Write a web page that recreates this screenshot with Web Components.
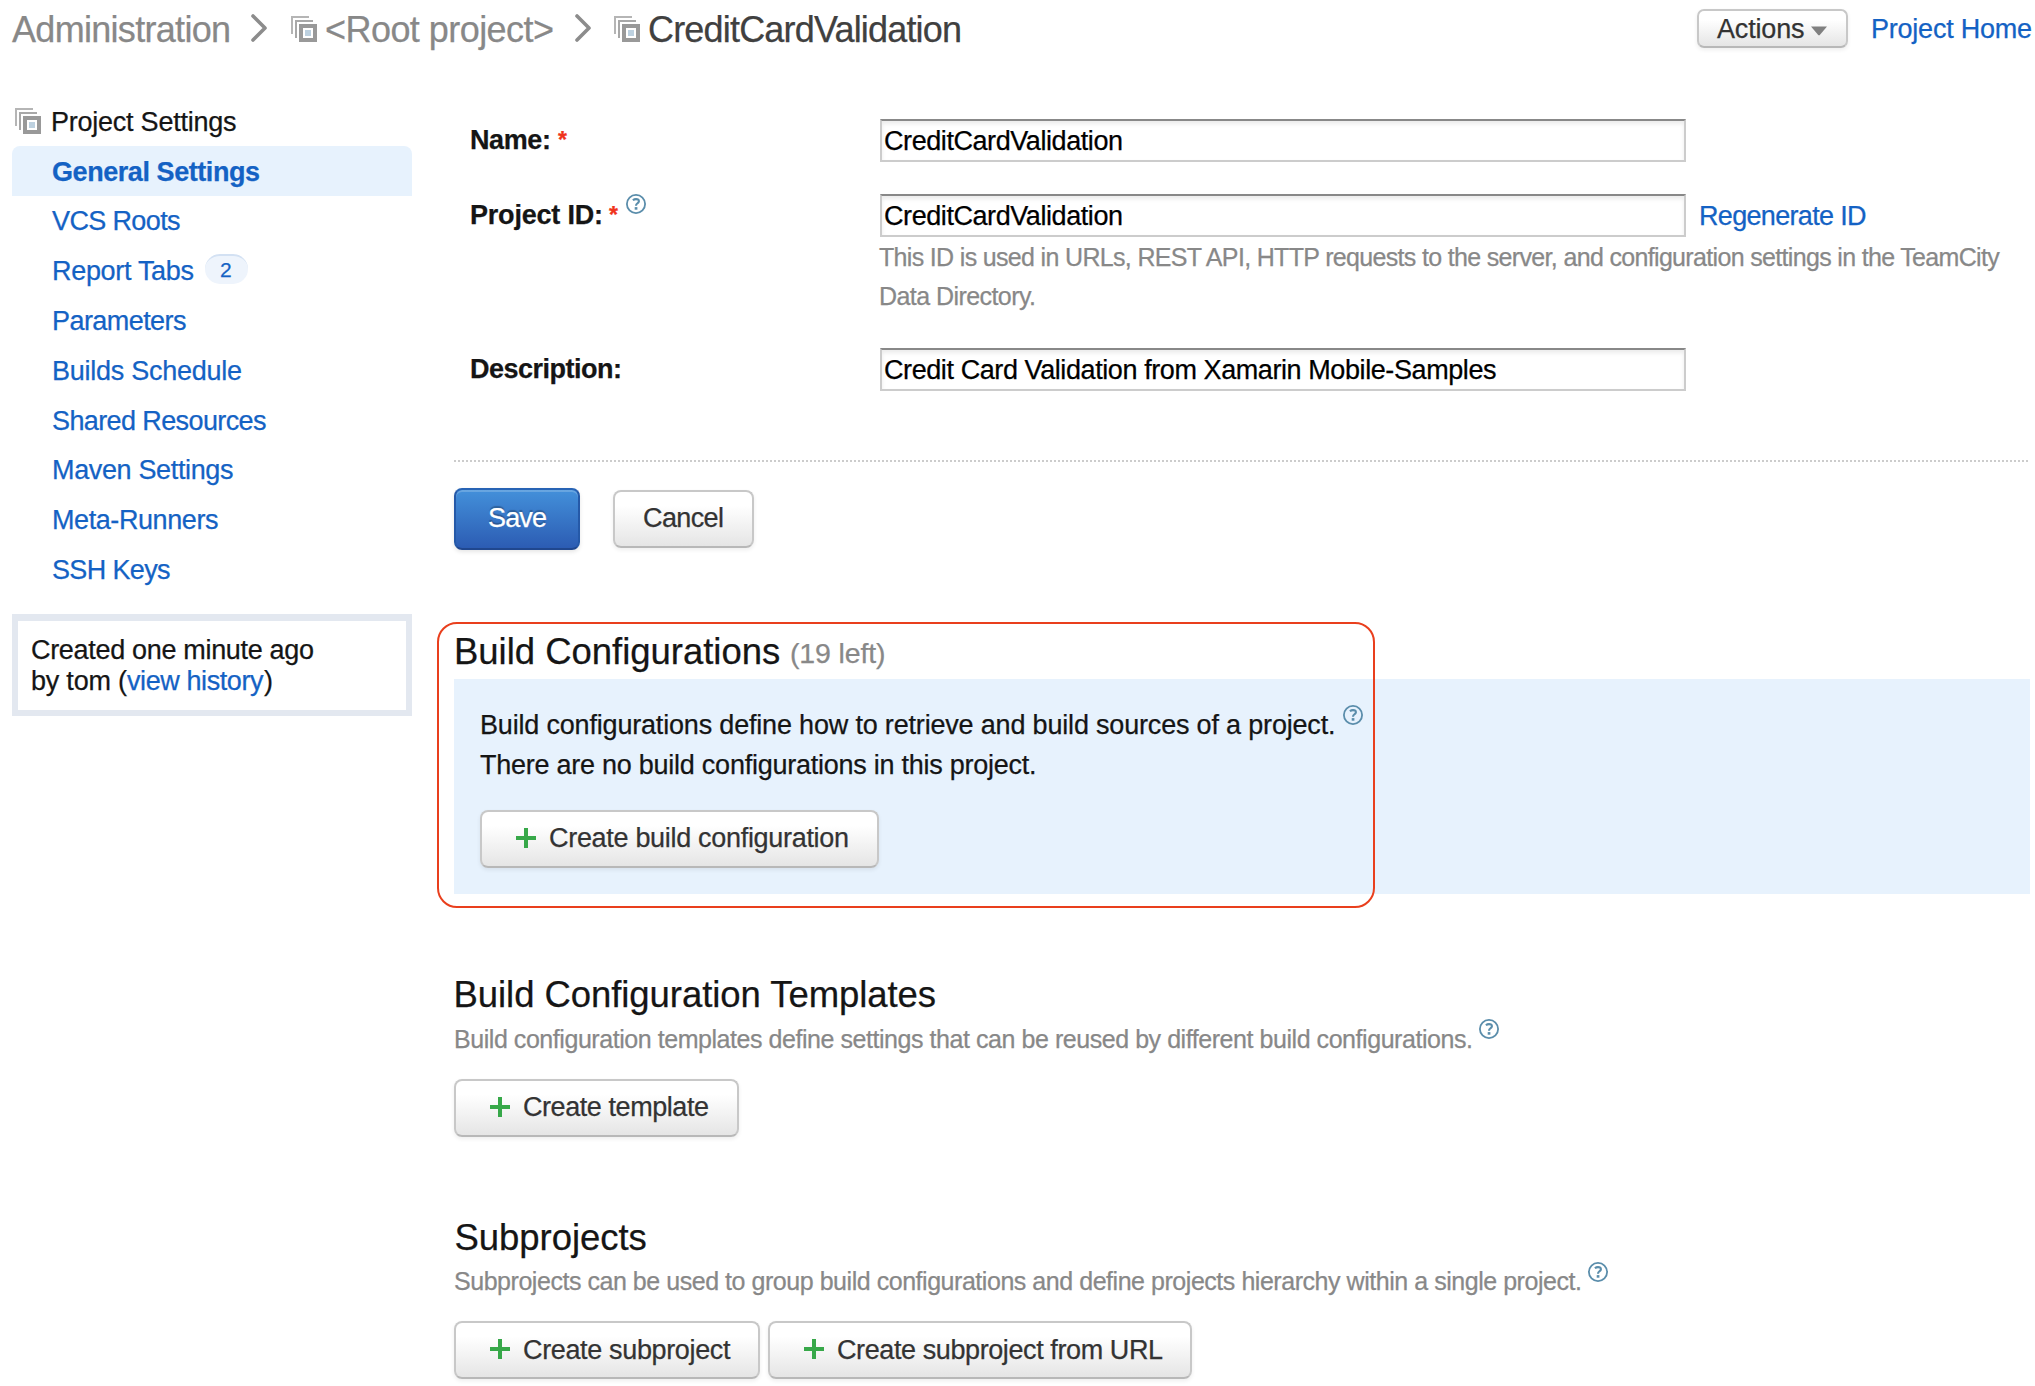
<!DOCTYPE html>
<html lang="en">
<head>
<meta charset="utf-8">
<title>CreditCardValidation - Project Settings</title>
<style>
html,body{margin:0;background:#fff}
body{width:2035px;height:1386px;overflow:hidden;font-family:"Liberation Sans",Arial,sans-serif;font-size:27px;color:#151515}
</style>
</head>
<body>
<admin-page></admin-page>
<script>
const define = (name, html, setup) => {
  const tpl = document.createElement('template');
  tpl.innerHTML = html;
  customElements.define(name, class extends HTMLElement {
    connectedCallback() {
      if (this.shadowRoot) return;
      this.attachShadow({ mode: 'open' }).appendChild(tpl.content.cloneNode(true));
      if (setup) setup(this, this.shadowRoot);
    }
  });
};

/* One line of text whose visible ink spans exactly `w` pixels. */
const ctx = document.createElement('canvas').getContext('2d');
define('fit-text', `<style>
:host{display:block;flex:none;white-space:nowrap;line-height:40px;font-size:27px;font-variant-ligatures:none;-webkit-text-stroke:.25px currentColor}
:host([kind=title]){font-size:36px;line-height:41px}
:host([kind=head]){font-size:36.5px;line-height:41px}
:host([kind=note]){font-size:25px;line-height:39px;color:#888}
:host([kind=count]){font-size:28.5px;color:#888}
:host([kind=mini]){font-size:21px;line-height:30px}
:host([kind=star]){font-size:23px;line-height:40px;color:#f0341c}
:host([link]){color:#1462c4;cursor:pointer}
:host([bold]){font-weight:bold}
span{display:block}
</style><span><slot></slot></span>`, (el, root) => {
  const cs = getComputedStyle(el), text = el.textContent, w = +el.getAttribute('w');
  ctx.font = `${cs.fontWeight} ${cs.fontSize} "Liberation Sans"`;
  const m = ctx.measureText(text);
  const ink = m.actualBoundingBoxLeft + m.actualBoundingBoxRight;
  const span = root.querySelector('span');
  el.style.width = w + 'px';
  span.style.marginLeft = m.actualBoundingBoxLeft + 'px';
  if (text.length > 1) span.style.letterSpacing = (w - ink) / (text.length - 1) + 'px';
});

define('project-icon', `<style>:host{display:block;flex:none;width:26px;height:26px}svg{display:block}</style>
<svg width="26" height="26" shape-rendering="crispEdges"><path d="M0 0H18V2H2V18H0Z" fill="#b5b5b5"/><path d="M4 4H22V6H6V22H4Z" fill="#a8a8a8"/><path fill-rule="evenodd" d="M8 8H26V26H8ZM12 12V22H22V12Z" fill="#999"/><path d="M14 14H20V20H14Z" fill="#bdd1e0"/></svg>`);

define('help-icon', `<style>:host{display:block;flex:none;width:20px;height:20px}svg{display:block}</style>
<svg width="20" height="20" fill="none" stroke="#5a8dab"><circle cx="10" cy="10" r="9.1" stroke-width="1.8"/><path d="M6.9 6.3Q8.3 5.1 10 5.1Q13 5.1 12.9 7.3Q12.8 8.5 11.4 9.3Q10 10.1 10 11.7" stroke-width="2.1"/><path d="M8.7 14.4H11.4" stroke-width="2.6"/></svg>`);

define('crumb-arrow', `<style>:host{display:block;flex:none;width:17px;height:28px}svg{display:block}</style>
<svg width="17" height="28" fill="none" stroke="#8c8c8c" stroke-width="3.6" stroke-linecap="round" stroke-linejoin="round"><path d="M2 2L14 14L2 26"/></svg>`);

define('plus-icon', `<style>:host{display:block;flex:none;width:20px;height:20px}svg{display:block}</style>
<svg width="20" height="20" shape-rendering="crispEdges"><path d="M8 0H12V8H20V12H12V20H8V12H0V8H8Z" fill="#37a849"/></svg>`);

define('tc-button', `<style>
:host{display:flex;flex:none;align-items:flex-start;box-sizing:border-box;height:58px;padding:6px 0 0 29px;border:2px solid #c8c8c8;border-bottom-color:#b8b8b8;border-radius:8px;background:linear-gradient(#fff 25%,#e5e5e5);box-shadow:0 2px 4px rgba(0,0,0,.07);color:#333;cursor:pointer}
:host([primary]){height:62px;padding:8px 0 0 33px;border-color:#2763b5 #2559a8 #20478e;background:linear-gradient(#4390da,#2c5cb3);box-shadow:inset 0 2px 0 rgba(255,255,255,.2),0 2px 4px rgba(0,0,0,.1);color:#fff;text-shadow:0 -2px 1px rgba(0,0,0,.25)}
:host([add]){padding:6px 0 0 34px}
plus-icon{display:none;margin:10px 14px 0 0}
:host([add]) plus-icon{display:block}
:host([small]){height:39px;padding:0 0 0 18px;border-radius:7px}
</style><plus-icon></plus-icon><slot></slot>`);

define('text-field', `<style>
:host{display:block;flex:none;box-sizing:border-box;width:806px;height:43px;padding-left:3px;border:2px solid #ccc;border-top-color:#888;box-shadow:inset 0 3px 4px rgba(0,0,0,.08);background:#fff;color:#000}
</style><slot></slot>`);

define('form-row', `<style>
:host{display:flex;align-items:flex-start;padding-left:17px}
.label{display:flex;width:409px;flex:none;padding-top:1px}
.side{display:flex}
</style><div class="label"><slot name="label"></slot></div><div><div class="side"><slot></slot></div><slot name="hint"></slot></div>`);

define('nav-item', `<style>
:host{display:flex;box-sizing:border-box;height:49.8px;padding:5.6px 0 0 41px}
:host([active]){background:#e7f2fd;border-radius:8px 8px 0 0}
</style><slot></slot>`);

define('count-badge', `<style>
:host{display:block;box-sizing:border-box;width:43px;height:30px;margin:3px 0 0 11px;padding-left:15px;border-top:2px solid #d3e1f3;border-radius:15px;background:#eef4fc}
</style><slot></slot>`);

define('page-header', `<style>
:host{display:flex;align-items:flex-start;height:50px;padding-left:12px;color:#888}
fit-text[kind=title]{margin-top:9px}
project-icon{margin-top:16px}crumb-arrow{margin-top:14px}
.now{color:#404040}
tc-button{width:151px;box-sizing:border-box;margin:9px 25px 0 0}
tc-button fit-text{margin-top:-2px}
.right{display:flex;margin-left:auto;padding-right:4px}
.caret{margin:15px 0 0 7px;display:block}
</style>
<fit-text kind="title" w="217">Administration</fit-text>
<crumb-arrow style="margin-left:22px"></crumb-arrow>
<project-icon style="margin-left:23px"></project-icon>
<fit-text kind="title" w="227" style="margin-left:9px">&lt;Root project&gt;</fit-text>
<crumb-arrow style="margin-left:22px"></crumb-arrow>
<project-icon style="margin-left:22px"></project-icon>
<fit-text kind="title" w="311" class="now" style="margin-left:9px">CreditCardValidation</fit-text>
<div class="right"><tc-button small><fit-text w="87">Actions</fit-text><svg class="caret" width="16" height="10"><path d="M0 0.5H16L8.6 9.3H7.4Z" fill="#808080"/></svg></tc-button>
<fit-text link w="158" style="margin-top:9px">Project Home</fit-text></div>`);

define('side-bar', `<style>
:host{display:block;flex:none;width:400px;padding-top:52px}
.head{display:flex;height:44px;padding-left:3px}
.head project-icon{margin:6px 12px 0 0}
.stem{margin-left:1px}
.slant{margin-left:-1px}
.info{box-sizing:border-box;height:102px;margin-top:19.8px;border:6px solid #e3e8f0;border-top-width:7px;padding:14px 0 0 14px}
.info fit-text{line-height:31px}
.line{display:flex}
</style>
<div class="head"><project-icon></project-icon><fit-text w="183">Project Settings</fit-text></div>
<nav>
<nav-item active><fit-text link bold w="206">General Settings</fit-text></nav-item>
<nav-item><fit-text link class="slant" w="128">VCS Roots</fit-text></nav-item>
<nav-item><fit-text link class="stem" w="140">Report Tabs</fit-text><count-badge><fit-text link kind="mini" style="margin:-1px 0 0 1px" w="11">2</fit-text></count-badge></nav-item>
<nav-item><fit-text link class="stem" w="132">Parameters</fit-text></nav-item>
<nav-item><fit-text link class="stem" w="187">Builds Schedule</fit-text></nav-item>
<nav-item><fit-text link w="213">Shared Resources</fit-text></nav-item>
<nav-item><fit-text link class="stem" w="179">Maven Settings</fit-text></nav-item>
<nav-item><fit-text link class="stem" w="164">Meta-Runners</fit-text></nav-item>
<nav-item><fit-text link w="117">SSH Keys</fit-text></nav-item>
</nav>
<div class="info"><fit-text w="281">Created one minute ago</fit-text>
<div class="line"><fit-text w="95">by tom (</fit-text><fit-text link w="137">view history</fit-text><fit-text w="6">)</fit-text></div></div>`);

define('settings-form', `<style>
:host{display:block;padding-top:69px}
.rule{width:1574px;height:2px;background:repeating-linear-gradient(90deg,#ccc 0 2px,#fff 2px 4px)}
.actions{display:flex;align-items:flex-start;padding-top:26px}
</style>
<form-row style="height:75px"><fit-text slot="label" bold w="78">Name:</fit-text><fit-text slot="label" bold kind="star" w="9" style="margin-left:9px">*</fit-text>
<text-field><fit-text w="237">CreditCardValidation</fit-text></text-field></form-row>
<form-row style="height:154px"><fit-text slot="label" bold w="130">Project ID:</fit-text><fit-text slot="label" bold kind="star" w="9" style="margin-left:8px">*</fit-text><help-icon slot="label" style="margin:-1px 0 0 8px"></help-icon>
<text-field><fit-text w="237">CreditCardValidation</fit-text></text-field><fit-text link w="165" style="margin:2px 0 -1px 15px">Regenerate ID</fit-text>
<fit-text slot="hint" kind="note" w="1124" style="margin:1px 0 0 -1px">This ID is used in URLs, REST API, HTTP requests to the server, and configuration settings in the TeamCity</fit-text><fit-text slot="hint" kind="note" w="153" style="margin-left:1px">Data Directory.</fit-text></form-row>
<form-row style="height:112px"><fit-text slot="label" bold w="149">Description:</fit-text>
<text-field><fit-text w="611">Credit Card Validation from Xamarin Mobile-Samples</fit-text></text-field></form-row>
<div class="rule"></div>
<div class="actions"><tc-button primary style="width:126px"><fit-text w="57">Save</fit-text></tc-button>
<tc-button style="width:141px;margin:2px 0 0 33px"><fit-text w="79">Cancel</fit-text></tc-button></div>`);

define('build-configurations', `<style>
:host{display:block;position:relative;margin-top:81px}
.head,.line{display:flex;align-items:flex-start}
.head{height:41px;padding-left:3px}
.panel{box-sizing:border-box;width:1576px;height:215px;margin-top:7px;padding:26px 0 0 26px;background:#e7f2fd}
.outline{position:absolute;left:-17px;top:-9px;box-sizing:border-box;width:938px;height:286px;border:2px solid #e93f1d;border-radius:20px}
</style>
<div class="head"><fit-text kind="head" w="322">Build Configurations</fit-text><fit-text kind="count" w="93" style="margin:2px 0 0 12px">(19 left)</fit-text></div>
<div class="panel"><div class="line"><fit-text w="852" style="margin-left:2px">Build configurations define how to retrieve and build sources of a project.</fit-text><help-icon style="margin-left:9px"></help-icon></div>
<fit-text w="555">There are no build configurations in this project.</fit-text>
<tc-button add style="width:399px;margin-top:25px"><fit-text w="298">Create build configuration</fit-text></tc-button></div>
<div class="outline"></div>`);

define('page-section', `<style>
:host{display:block;margin-top:80px}
.pad{padding-left:1.5px}
.note{display:flex;align-items:flex-start;padding-left:1px;margin-top:4px}
.buttons{display:flex;gap:8px;margin-top:20px}
</style><div class="pad"><slot name="head"></slot></div><div class="note"><slot name="note"></slot></div><div class="buttons"><slot></slot></div>`);

define('admin-page', `<style>
:host{display:block}
.body{display:flex;padding-left:12px}
main{margin-left:42px;flex:1}
.low{margin-top:1px}
</style>
<page-header></page-header>
<div class="body"><side-bar></side-bar><main>
<settings-form></settings-form>
<build-configurations></build-configurations>
<page-section>
<fit-text slot="head" kind="head" w="479" style="margin-left:1px">Build Configuration Templates</fit-text>
<fit-text slot="note" kind="note" w="1015" style="margin:1px 0 0 1px">Build configuration templates define settings that can be reused by different build configurations.</fit-text><help-icon slot="note" style="margin-left:8px"></help-icon>
<tc-button add style="width:285px"><fit-text w="184">Create template</fit-text></tc-button>
</page-section>
<page-section>
<fit-text slot="head" kind="head" w="190">Subprojects</fit-text>
<fit-text slot="note" kind="note" w="1125">Subprojects can be used to group build configurations and define projects hierarchy within a single project.</fit-text><help-icon slot="note" style="margin-left:8px"></help-icon>
<tc-button add style="width:306px"><fit-text class="low" w="207">Create subproject</fit-text></tc-button>
<tc-button add style="width:424px"><fit-text class="low" w="325">Create subproject from URL</fit-text></tc-button>
</page-section>
</main></div>`);
</script>
</body>
</html>
